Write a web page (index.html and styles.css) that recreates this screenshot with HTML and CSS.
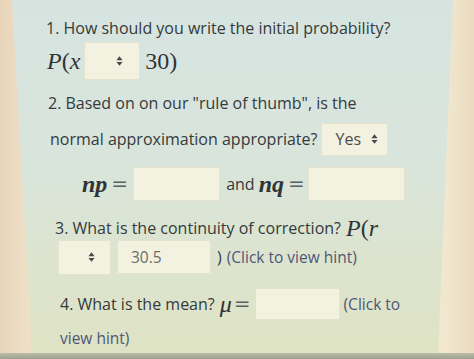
FILE: index.html
```html
<!DOCTYPE html>
<html>
<head>
<meta charset="utf-8">
<link rel="stylesheet" href="styles.css">
</head>
<body>
<div class="screen">
  <div class="panel">
    <div class="row r1"><span class="q">1. How should you write the initial probability?</span></div>
    <div class="row r2">
      <span class="m"><i>P</i>(<i>x</i></span>
      <span class="sel s-p"><svg class="arr" viewBox="0 0 8 11"><path d="M4 0L7.5 4.5H0.5Z M4 11L7.5 6.5H0.5Z"/></svg></span>
      <span class="m">30)</span>
    </div>
    <div class="row r3"><span class="q">2. Based on on our "rule of thumb", is the</span></div>
    <div class="row r4">
      <span class="q">normal approximation appropriate?</span>
      <span class="sel s-yes"><span class="val">Yes</span><svg class="arr" viewBox="0 0 8 11"><path d="M4 0L7.5 4.5H0.5Z M4 11L7.5 6.5H0.5Z"/></svg></span>
    </div>
    <div class="row r5">
      <span class="m mb"><i>np</i></span><span class="eq">=</span>
      <span class="box b-np"></span>
      <span class="q">and</span>
      <span class="m mb"><i>nq</i></span><span class="eq">=</span>
      <span class="box b-nq"></span>
    </div>
    <div class="row r6">
      <span class="q">3. What is the continuity of correction?</span>
      <span class="m"><i>P</i>(<i>r</i></span>
    </div>
    <div class="row r7">
      <span class="sel s-c"><svg class="arr" viewBox="0 0 8 11"><path d="M4 0L7.5 4.5H0.5Z M4 11L7.5 6.5H0.5Z"/></svg></span>
      <span class="box b-val">30.5</span>
      <span class="q">)</span>
      <span class="hint">(Click to view hint)</span>
    </div>
    <div class="row r8">
      <span class="q">4. What is the mean?</span>
      <span class="m"><i>μ</i></span><span class="eq">=</span>
      <span class="box b-mu"></span>
      <span class="hint">(Click to</span>
    </div>
    <div class="row r9"><span class="hint">view hint)</span></div>
  </div>
  <div class="bottom"></div>
</div>
</body>
</html>
```
FILE: styles.css
```css
html, body {
  margin: 0;
  padding: 0;
}
body {
  width: 474px;
  height: 359px;
  overflow: hidden;
  font-family: "Open Sans", "Noto Sans", sans-serif;
  color: #353a3a;
}
.screen {
  width: 474px;
  height: 359px;
  display: flex;
  flex-direction: column;
  background: linear-gradient(to right, #e8d5bb 0%, #eedfc6 6%, #ede6d2 50%, #f1e7cf 94%, #eadcc0 100%);
}
.panel {
  flex: 1;
  display: flex;
  flex-direction: column;
  padding-top: 13px;
  background: linear-gradient(to bottom, #d6e4e1 0%, #d9e5dc 45%, #dde4cc 80%, #dfe3c5 100%);
  clip-path: polygon(12px 0, 453px 0, 438px 100%, 32px 100%);
}
.bottom {
  height: 6px;
  background: linear-gradient(to bottom, #b9bca7, #9ea18e);
}
.row {
  height: 30px;
  display: flex;
  align-items: center;
  white-space: nowrap;
  flex-shrink: 0;
}
.q {
  font-size: 16px;
}
.hint {
  font-size: 15.5px;
  color: #4f5677;
}
.m {
  font-family: "Liberation Serif", "DejaVu Serif", serif;
  font-size: 24px;
  color: #2f3435;
}
.mb i {
  font-weight: bold;
}
.eq {
  font-family: "DejaVu Serif", serif;
  font-size: 20px;
  color: #5a5f60;
  margin-left: 4px;
}
.sel, .box {
  display: flex;
  align-items: center;
  box-sizing: border-box;
  background: #f3f1e0;
  border: 1px solid #e6e3cd;
  border-radius: 2px;
  flex-shrink: 0;
}
.arr {
  width: 7px;
  height: 10px;
  fill: #45494a;
}
.val {
  font-size: 16px;
  color: #4a4e4e;
}

.r1 { padding-left: 46px; }
.r2 { margin-top: 3px; padding-left: 47px; }
.s-p { width: 56px; height: 38px; margin: 0 5px 0 4px; justify-content: flex-end; padding-right: 16px; }

.r3 { margin-top: 12px; padding-left: 48px; }
.r4 { margin-top: 6px; padding-left: 50px; }
.s-yes { width: 67px; height: 33px; margin-left: 4px; padding-left: 13px; gap: 10px; }

.r5 { margin-top: 15px; padding-left: 82px; }
.b-np { width: 87px; height: 34px; margin: 0 6px 0 5px; }
.b-nq { width: 97px; height: 34px; margin-left: 3px; }
.r5 .q { margin-right: 4px; }

.r6 { margin-top: 14px; padding-left: 55px; }
.r6 .m { margin-left: 5px; }

.r7 { margin-top: -1px; padding-left: 58px; }
.s-c { width: 53px; height: 35px; justify-content: flex-end; padding-right: 15px; }
.b-val { width: 94px; height: 34px; margin: 0 6px; padding-left: 13px; font-size: 15.5px; color: #6b6d69; }
.r7 .hint { margin-left: 5px; }

.r8 { margin-top: 17px; padding-left: 60px; }
.r8 .m { margin-left: 5px; }
.r8 .eq { margin-left: 2px; }
.b-mu { width: 85px; height: 32px; margin: 0 4px 0 4px; }

.r9 { margin-top: 4px; padding-left: 60px; }
```
